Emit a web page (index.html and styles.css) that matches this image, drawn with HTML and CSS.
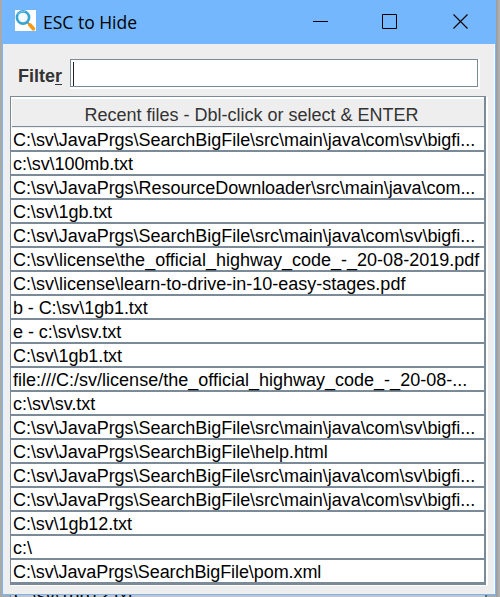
FILE: index.html
```
<!DOCTYPE html>
<html lang="en">
<head>
<meta charset="utf-8">
<title>ESC to Hide</title>
<link rel="stylesheet" href="styles.css">
</head>
<body>
<div class="window">
  <header class="titlebar">
    <svg class="logo" width="21" height="21" viewBox="0 0 21 21"><path fill="#fff" d="M0 0h21v21H0z"/><path d="M12 12l2.500 2.500" stroke="#8998a3" stroke-width="2"/><path d="M14.800 14.800l3.500 4" stroke="#f39b16" stroke-width="3.600" stroke-linecap="round"/><circle cx="8" cy="7.500" r="6.100" fill="#f5fbff" stroke="#39a5d5" stroke-width="2.600"/><path d="M3 5a6 6 0 0 1 7-3.500" fill="none" stroke="#7bc9e9"/></svg>
    <h1 class="title">ESC to Hide</h1>
    <svg class="controls" width="156" height="16" viewBox="0 0 156 16" fill="none" stroke="#000"><path d="M0 7.500h15M69.500 .500h14v14h-14z"/><path d="M140.500 .500l14 14M154.500 .500l-14 14" stroke-width="1.100"/></svg>
  </header>
  <main class="content">
    <div class="filter"><label class="label">Filte<span class="mnemonic">r</span></label><div class="field"><div class="input"><span class="caret"></span></div></div></div>
    <div class="table">
      <div class="heading">Recent files - Dbl-click or select &amp; ENTER</div>
      <div class="row">C:\sv\JavaPrgs\SearchBigFile\src\main\java\com\sv\bigfi...</div>
      <div class="row short">c:\sv\100mb.txt</div>
      <div class="row">C:\sv\JavaPrgs\ResourceDownloader\src\main\java\com...</div>
      <div class="row short">C:\sv\1gb.txt</div>
      <div class="row">C:\sv\JavaPrgs\SearchBigFile\src\main\java\com\sv\bigfi...</div>
      <div class="row loose">C:\sv\license\the_official_highway_code_-_20-08-2019.pdf</div>
      <div class="row loose">C:\sv\license\learn-to-drive-in-10-easy-stages.pdf</div>
      <div class="row short">b - C:\sv\1gb1.txt</div>
      <div class="row">e - c:\sv\sv.txt</div>
      <div class="row short">C:\sv\1gb1.txt</div>
      <div class="row loose">file:///C:/sv/license/the_official_highway_code_-_20-08-...</div>
      <div class="row">c:\sv\sv.txt</div>
      <div class="row">C:\sv\JavaPrgs\SearchBigFile\src\main\java\com\sv\bigfi...</div>
      <div class="row">C:\sv\JavaPrgs\SearchBigFile\help.html</div>
      <div class="row">C:\sv\JavaPrgs\SearchBigFile\src\main\java\com\sv\bigfi...</div>
      <div class="row">C:\sv\JavaPrgs\SearchBigFile\src\main\java\com\sv\bigfi...</div>
      <div class="row short">C:\sv\1gb12.txt</div>
      <div class="row">c:\</div>
      <div class="row short">C:\sv\JavaPrgs\SearchBigFile\pom.xml</div>
    </div>
  </main>
</div>
<div class="behind"><span class="behind-text">C:\sv\1gb12.txt</span></div>
</body>
</html>
```
FILE: styles.css
```
* { box-sizing: border-box; }
body {
  margin: 0;
  width: 500px;
  height: 597px;
  overflow: hidden;
  background: linear-gradient(90deg, #a9a9a9 0 496px, #9c9c9c 496px, #b4b4b4);
  font: 18px/22px "Liberation Sans", Arial, sans-serif;
  color: #000;
}
.window {
  width: 494px;
  height: 595px;
  margin-left: 2px;
  border: solid #74b7fc;
  border-width: 0 1px 1px;
  background: #eee;
}
.titlebar {
  display: flex;
  align-items: center;
  height: 44px;
  padding: 0 26px 0 12px;
  background: #74b7fc;
}
.logo { margin-top: -3px; }
.title {
  margin: 0 0 0 7px;
  font: 17.5px/24px "Open Sans", sans-serif;
  white-space: nowrap;
}
.controls { margin: 0 0 0 auto; }
.content {
  height: 550px;
  padding: 15px 8px 0 7px;
  border-right: 1px solid #fff;
}
.filter { display: flex; height: 37px; }
.label {
  width: 60px;
  padding: 6px 0 0 8px;
  font-weight: bold;
  color: #333;
}
.mnemonic { border-bottom: 1px solid #333; line-height: 18px; display: inline-block; height: 18px; }
.field {
  width: 410px;
  height: 30px;
  border: solid #fff;
  border-width: 0 2px 2px 0;
}
.input {
  height: 28px;
  padding: 2px;
  border: 1px solid #7a8a99;
  background: #fff;
}
.caret { display: block; width: 1px; height: 24px; background: #222; }
.table {
  width: 476px;
  height: 489px;
  border: solid #7a8a99;
  border-width: 1px 2px 1px 1px;
  box-shadow: 1px 1px #fff, 2px 1px #fff;
  background: #fff;
}
.heading {
  height: 31px;
  padding-left: 7px;
  border: solid #fff;
  border-width: 2px 0 0 1px;
  background: linear-gradient(#7a8a99, #7a8a99) bottom 1px left 0 / 100% 1px no-repeat, #eee;
  color: #333;
  text-align: center;
  line-height: 33px;
}
.row {
  height: 24px;
  padding-left: 2px;
  border-bottom: 2px solid #7a8a99;
  line-height: 25px;
  letter-spacing: -0.035px;
  white-space: nowrap;
}
.short { letter-spacing: -0.08px; }
.loose { letter-spacing: 0.005px; }
.behind {
  height: 2px;
  margin-left: 10px;
  width: 477px;
  overflow: hidden;
  border-left: 1px solid #7a8a99;
  border-right: 2px solid #56677a;
  background: #c4c4c4;
}
.behind-text { display: block; margin: -10px 0 0 3px; letter-spacing: -0.08px; }
```
